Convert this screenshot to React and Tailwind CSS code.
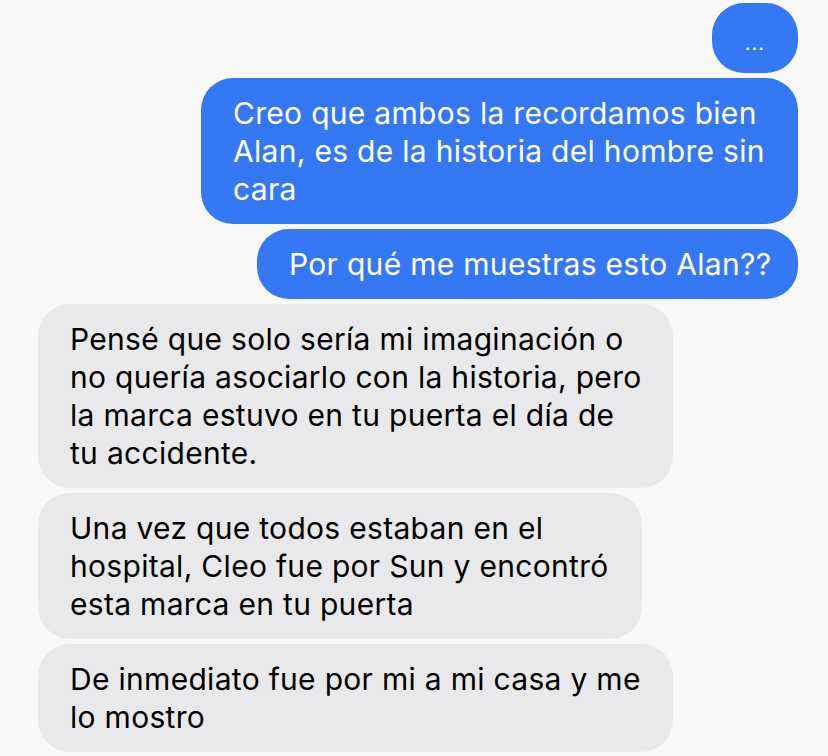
import React from 'react';

const font = { fontFamily: 'Inter, "Noto Sans", sans-serif' };

function Sent({ children, className = '' }) {
  return (
    <div className={`self-end rounded-[32px] bg-[#3478f6] px-8 py-4 text-white ${className}`}>
      {children}
    </div>
  );
}

function Received({ children, className = '' }) {
  return (
    <div className={`self-start rounded-[32px] bg-[#e9e9eb] px-8 py-4 text-black ${className}`}>
      {children}
    </div>
  );
}

export default function App() {
  return (
    <div
      className="flex h-[756px] w-[828px] flex-col gap-[5px] overflow-hidden bg-[#f8f8f8] pl-[38px] pr-[30px] pt-[3px] text-[30px] leading-[38px] tracking-[0.3px]"
      style={font}
    >
      <Sent className="flex h-[70px] w-[86px] items-center justify-center !px-0 !py-0">
        <span className="mt-[10px] text-[20px] leading-none tracking-[1px]">...</span>
      </Sent>
      <Sent className="w-[597px]">
        Creo que ambos la recordamos bien
        <br />
        Alan, es de la historia del hombre sin
        <br />
        cara
      </Sent>
      <Sent className="w-[541px] whitespace-nowrap">Por qué me muestras esto Alan??</Sent>
      <Received className="w-[635px] whitespace-nowrap">
        Pensé que solo sería mi imaginación o
        <br />
        no quería asociarlo con la historia, pero
        <br />
        la marca estuvo en tu puerta el día de
        <br />
        tu accidente.
      </Received>
      <Received className="w-[604px] whitespace-nowrap">
        Una vez que todos estaban en el
        <br />
        hospital, Cleo fue por Sun y encontró
        <br />
        esta marca en tu puerta
      </Received>
      <Received className="w-[635px] whitespace-nowrap">
        De inmediato fue por mi a mi casa y me
        <br />
        lo mostro
      </Received>
    </div>
  );
}
